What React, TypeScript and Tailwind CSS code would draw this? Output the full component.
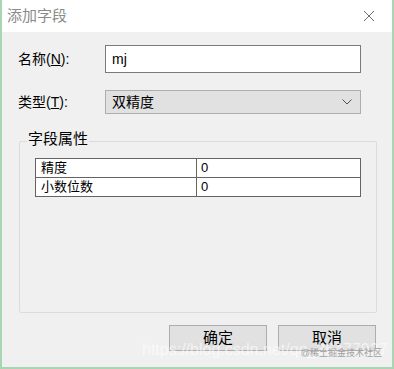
export default function App() {
  const font = { fontFamily: '"Liberation Sans", "Noto Sans CJK SC", sans-serif' };

  return (
    <div className="w-[394px] h-[369px] bg-[#a9d6b2] p-[0_2px_2px_2px] text-black" style={font}>
      <div className="h-full flex flex-col bg-[#f0f0f0]">
        {/* title bar */}
        <div className="h-[32px] bg-white flex items-center justify-between pl-[5px] pr-[17px]">
          <span className="text-[15px] text-[#8a8a8a]">添加字段</span>
          <svg width="12" height="12" viewBox="0 0 12 12">
            <path d="M1 1 L11 11 M11 1 L1 11" stroke="#6d6d6d" strokeWidth="1" fill="none" />
          </svg>
        </div>

        <div className="flex-1 flex flex-col px-[16px] pt-[13px]">
          <div className="flex items-center h-[28px]">
            <span className="w-[87px] text-[14px]">
              名称(<span className="underline">N</span>):
            </span>
            <div className="w-[256px] h-[28px] bg-white border border-[#7a7a7a] flex items-center px-[6px] text-[14px]">
              mj
            </div>
          </div>

          <div className="flex items-center h-[24px] mt-[17px]">
            <span className="w-[87px] text-[14px]">
              类型(<span className="underline">T</span>):
            </span>
            <div className="w-[256px] h-[24px] bg-[#e1e1e1] border border-[#adadad] flex items-center justify-between pl-[6px] pr-[8px] text-[14px]">
              <span>双精度</span>
              <svg width="10" height="6" viewBox="0 0 10 6">
                <path d="M0.5 0.5 L5 5 L9.5 0.5" stroke="#505050" strokeWidth="1" fill="none" />
              </svg>
            </div>
          </div>

          {/* group box */}
          <div className="relative mt-[27px] ml-[1px] w-[358px] h-[172px] border border-[#dcdcdc] rounded-[2px]">
            <span className="absolute left-[7px] top-[-13px] bg-[#f0f0f0] px-[1px] text-[15px] leading-[20px]">
              字段属性
            </span>
            <div className="mt-[16px] ml-[15px] w-[326px] border border-[#646464] bg-white text-[13px]">
              <div className="flex h-[19px] border-b border-[#646464]">
                <div className="w-[161px] border-r border-[#646464] pl-[5px] leading-[18px]">精度</div>
                <div className="flex-1 pl-[4px] leading-[18px]">0</div>
              </div>
              <div className="flex h-[18px]">
                <div className="w-[161px] border-r border-[#646464] pl-[5px] leading-[18px]">小数位数</div>
                <div className="flex-1 pl-[4px] leading-[18px]">0</div>
              </div>
            </div>
          </div>

          {/* buttons */}
          <div className="relative flex justify-end gap-[11px] mt-[12px]">
            <button className="w-[98px] h-[26px] bg-[#e1e1e1] border border-[#adadad] text-[15px]">确定</button>
            <button className="w-[98px] h-[26px] bg-[#e1e1e1] border border-[#adadad] text-[15px]">取消</button>
            <span className="absolute left-[124px] top-[13px] text-[16px] text-white/60 whitespace-nowrap">
              https://blog.csdn.net/qq_36477927
            </span>
            <span className="absolute right-[-6px] top-[22px] text-[9px] text-[#a0a0a0] whitespace-nowrap">
              @稀土掘金技术社区
            </span>
          </div>
        </div>
      </div>
    </div>
  );
}
